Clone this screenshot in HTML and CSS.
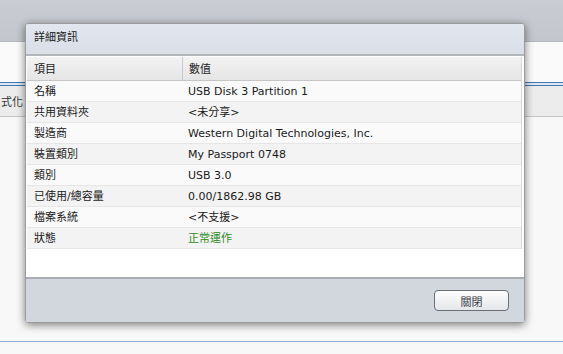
FILE: index.html
```html
<!DOCTYPE html>
<html lang="zh-Hant">
<head>
  <meta charset="UTF-8" />
  <title>詳細資訊</title>
  <link rel="stylesheet" href="styles.css">
</head>
<body>
  <div class="topbar"></div>
  <div class="pane"></div>
  <div class="tabline"></div>
  <div class="toolbar"><span class="tool">式化</span></div>
  <div class="list"></div>
  <div class="bottomline"></div>

  <div class="dialog">
    <div class="dialog-title">詳細資訊</div>
    <div class="dialog-body">
      <div class="grid">
        <div class="row head">
          <div class="cell key">項目</div>
          <div class="cell val">數值</div>
        </div>
        <div class="row"><div class="cell key">名稱</div><div class="cell val">USB Disk 3 Partition 1</div></div>
        <div class="row alt"><div class="cell key">共用資料夾</div><div class="cell val">&lt;未分享&gt;</div></div>
        <div class="row"><div class="cell key">製造商</div><div class="cell val">Western Digital Technologies, Inc.</div></div>
        <div class="row alt"><div class="cell key">裝置類別</div><div class="cell val">My Passport 0748</div></div>
        <div class="row"><div class="cell key">類別</div><div class="cell val">USB 3.0</div></div>
        <div class="row alt"><div class="cell key">已使用/總容量</div><div class="cell val">0.00/1862.98 GB</div></div>
        <div class="row"><div class="cell key">檔案系統</div><div class="cell val">&lt;不支援&gt;</div></div>
        <div class="row alt"><div class="cell key">狀態</div><div class="cell val ok">正常運作</div></div>
      </div>
    </div>
    <div class="dialog-foot">
      <button class="btn">關閉</button>
    </div>
  </div>
</body>
</html>
```

FILE: styles.css
```css
body {
  margin: 0;
  font-family: 'DejaVu Sans', 'Noto Sans CJK TC', sans-serif;
  font-size: 11px;
  color: #1a1a1a;
  background: #f8f8f8;
  overflow: hidden;
}

.topbar {
  height: 41px;
  background: linear-gradient(#c9ccd2, #c3c7cd);
  border-bottom: 1px solid #b6b9be;
}

.pane {
  height: 40px;
  background: #fafafa;
}

.tabline {
  height: 2px;
  border-top: 1px solid #3f78b0;
  border-bottom: 1px solid #3f78b0;
  background: #dbe7f2;
}

.toolbar {
  height: 30px;
  background: #ececec;
  border-bottom: 1px solid #c4c4c4;
  display: flex;
  align-items: center;
}

.tool {
  padding: 0 3px 0 1px;
  border-right: 1px solid #c8c8c8;
  color: #333;
}

.list {
  height: 224px;
  background: #f8f8f8;
}

.bottomline {
  height: 1px;
  background: #8eb0cf;
}

.dialog {
  position: absolute;
  left: 25px;
  top: 23px;
  width: 498px;
  height: 298px;
  border: 1px solid #9b9b9b;
  border-radius: 3px;
  box-shadow: 0 2px 8px rgba(0, 0, 0, 0.5);
  display: flex;
  flex-direction: column;
  overflow: hidden;
}

.dialog-title {
  height: 30px;
  line-height: 28px;
  padding-left: 8px;
  background: linear-gradient(#e2e6ee, #dadee6);
  border-bottom: 2px solid #b2b5ba;
  color: #222;
}

.dialog-body {
  flex: 1;
  background: #ffffff;
  padding: 1px 1px 0 1px;
  border-bottom: 2px solid #a9acb1;
}

.grid {
  border-right: 1px solid #d8d8d8;
  margin-right: 1px;
}

.row {
  display: flex;
  height: 20px;
  line-height: 22px;
  background: #fafafa;
  border-bottom: 1px solid #e6e6e6;
}

.row.alt {
  background: #f3f3f3;
}

.row.head {
  height: 23px;
  line-height: 25px;
  background: linear-gradient(#f3f3f3, #e5e5e5);
  border-bottom: 1px solid #c6c6c6;
}

.cell {
  padding-left: 7px;
  white-space: nowrap;
}

.key {
  width: 148px;
}

.head .key {
  border-right: 1px solid #c8c8c8;
}

.val {
  flex: 1;
  padding-left: 6px;
}

.ok {
  color: #2e8b1e;
}

.dialog-foot {
  height: 43px;
  background: #d2d6dd;
  display: flex;
  justify-content: flex-end;
  align-items: flex-start;
  padding-right: 15px;
}

.btn {
  margin-top: 11px;
  width: 75px;
  height: 21px;
  font-family: 'DejaVu Sans', 'Noto Sans CJK TC', sans-serif;
  font-size: 11px;
  color: #3a3a48;
  background: linear-gradient(#fdfdfd, #e4e6ea);
  border: 1px solid #6c6f74;
  border-radius: 4px;
  padding: 0;
}
```
